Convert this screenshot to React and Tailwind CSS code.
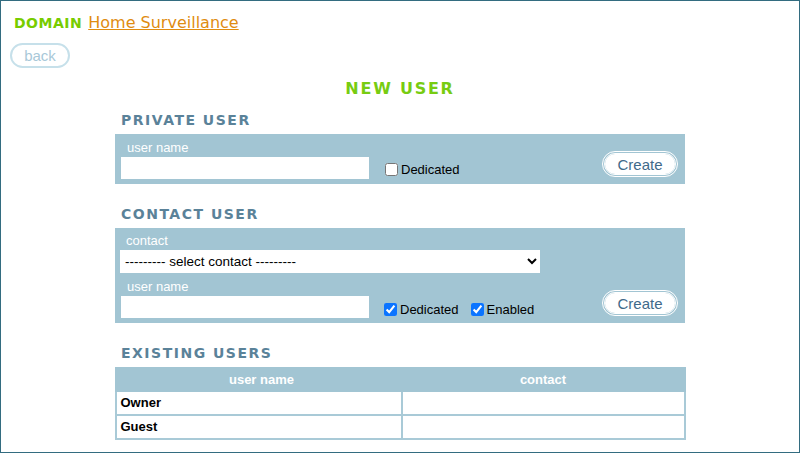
import { useState } from "react";

const panel = "bg-[#a2c5d3] w-[570px] mx-auto";
const label = "text-[13px] text-white leading-[15px] font-['Liberation_Sans',Arial,sans-serif]";
const title = "w-[570px] mx-auto px-[6px] text-[14px] font-bold tracking-[1.5px] text-[#5a8299] font-['DejaVu_Sans',Verdana,sans-serif] leading-[18px]";

function CreateButton() {
    return (
        <button className="w-[76px] h-[26px] rounded-full border-[3px] border-double border-white bg-white bg-clip-padding text-[15px] text-[#3f6a8a] leading-none font-['Liberation_Sans',Arial,sans-serif]">
            Create
        </button>
    );
}

function Check({ label: text, checked, onChange }) {
    return (
        <label className="flex items-center gap-[3px] text-[13px] text-black font-['Liberation_Sans',Arial,sans-serif] leading-none">
            <input
                type="checkbox"
                checked={checked}
                onChange={onChange}
                className="w-[13px] h-[13px] m-0 accent-[#0b74ff]"
            />
            {text}
        </label>
    );
}

export default function App() {
    const [dedicated1, setDedicated1] = useState(false);
    const [dedicated2, setDedicated2] = useState(true);
    const [enabled, setEnabled] = useState(true);

    const users = ["Owner", "Guest"];

    return (
        <div className="w-[800px] h-[453px] border border-[#336c80] bg-white overflow-hidden">
            <div className="pt-[10px] pl-[13px] flex items-baseline gap-[6px]">
                <span className="text-[14px] font-bold tracking-[0.5px] text-[#77cc00] font-['DejaVu_Sans',Verdana,sans-serif]">
                    DOMAIN
                </span>
                <a href="#" className="text-[16px] text-[#e08c10] underline font-['DejaVu_Sans',Verdana,sans-serif]">
                    Home Surveillance
                </a>
            </div>

            <div className="pl-[9px] pt-[8px]">
                <button className="w-[60px] h-[25px] rounded-full border-2 border-[#c6e0ea] text-[15px] text-[#a8c8d8] leading-none font-['Liberation_Sans',Arial,sans-serif]">
                    back
                </button>
            </div>

            <h1 className="mt-[10px] text-center text-[16px] font-bold tracking-[1.75px] text-[#77cc11] font-['DejaVu_Sans',Verdana,sans-serif] leading-[22px]">
                NEW USER
            </h1>

            <h2 className={title + " mt-[11px]"}>PRIVATE USER</h2>
            <div className={panel + " mt-[5px] h-[50px] pl-[6px] pr-[7px] pt-[6px] flex items-start"}>
                <div className="flex flex-col">
                    <span className={label + " pl-[6px]"}>user name</span>
                    <input type="text" className="mt-[2px] w-[248px] h-[22px] bg-white outline-none px-1" />
                </div>
                <div className="ml-[16px] mt-[23px]">
                    <Check label="Dedicated" checked={dedicated1} onChange={() => setDedicated1(!dedicated1)} />
                </div>
                <div className="ml-auto mt-[11px]">
                    <CreateButton />
                </div>
            </div>

            <h2 className={title + " mt-[21px]"}>CONTACT USER</h2>
            <div className={panel + " mt-[5px] h-[95px] pl-[5px] pr-[7px] pt-[5px]"}>
                <span className={label + " pl-[6px] block"}>contact</span>
                <select className="mt-[2px] w-[420px] h-[23px] bg-white text-[13.5px] text-black font-['Liberation_Sans',Arial,sans-serif] px-[1px] outline-none">
                    <option>--------- select contact ---------</option>
                </select>
                <div className="flex items-start">
                    <div className="flex flex-col pl-[1px]">
                        <span className={label + " pl-[6px] mt-[6px]"}>user name</span>
                        <input type="text" className="mt-[2px] w-[248px] h-[22px] bg-white outline-none px-1" />
                    </div>
                    <div className="ml-[15px] mt-[30px] flex gap-[12px]">
                        <Check label="Dedicated" checked={dedicated2} onChange={() => setDedicated2(!dedicated2)} />
                        <Check label="Enabled" checked={enabled} onChange={() => setEnabled(!enabled)} />
                    </div>
                    <div className="ml-auto mt-[17px]">
                        <CreateButton />
                    </div>
                </div>
            </div>

            <h2 className={title + " mt-[21px]"}>EXISTING USERS</h2>
            <table className="w-[571px] mx-auto mt-[5px] border-collapse font-['Liberation_Sans',Arial,sans-serif] text-[13px]">
                <thead>
                    <tr className="bg-[#a2c5d3] h-[23px]">
                        <th className="w-[286px] pl-[6px] text-white text-[13px] font-bold border-2 border-[#a2c5d3]">user name</th>
                        <th className="text-white text-[13px] font-bold border-2 border-[#a2c5d3]">contact</th>
                    </tr>
                </thead>
                <tbody>
                    {users.map((u) => (
                        <tr key={u} className="h-[24px]">
                            <td className="border-2 border-[#a9cad7] px-[4px] font-bold text-black">{u}</td>
                            <td className="border-2 border-[#a9cad7]"></td>
                        </tr>
                    ))}
                </tbody>
            </table>
        </div>
    );
}
